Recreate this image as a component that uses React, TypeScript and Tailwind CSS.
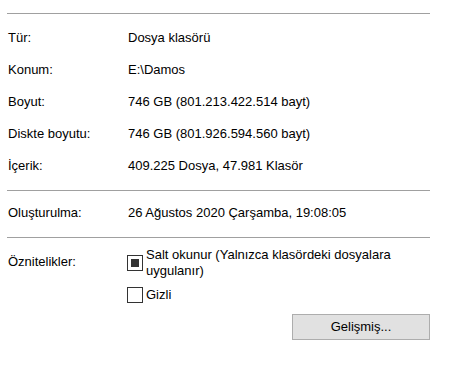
const rows = [
  { label: 'Tür:', value: 'Dosya klasörü' },
  { label: 'Konum:', value: 'E:\\Damos' },
  { label: 'Boyut:', value: '746 GB (801.213.422.514 bayt)' },
  { label: 'Diskte boyutu:', value: '746 GB (801.926.594.560 bayt)' },
  { label: 'İçerik:', value: '409.225 Dosya, 47.981 Klasör' },
]

function Checkbox({ checked }: { checked?: boolean }) {
  return (
    <span className="flex h-4 w-4 shrink-0 items-center justify-center border border-[#333] bg-white">
      {checked && <span className="h-2 w-2 bg-[#333]" />}
    </span>
  )
}

export default function App() {
  return (
    <div
      className="h-[376px] w-[464px] bg-white text-[13px] text-black"
      style={{ fontFamily: '"Liberation Sans", Arial, sans-serif' }}
    >
      <div className="ml-[7px] w-[423px] pt-[13px]">
        <div className="h-px bg-[#a0a0a0]" />

        {/* General info */}
        <div className="py-2">
          {rows.map(({ label, value }) => (
            <div key={label} className="flex h-8 items-center">
              <div className="w-[121px] pl-px">{label}</div>
              <div>{value}</div>
            </div>
          ))}
        </div>

        <div className="h-px bg-[#a0a0a0]" />

        <div className="pt-[6px] pb-2">
          <div className="flex h-8 items-center">
            <div className="w-[121px] pl-px">Oluşturulma:</div>
            <div>26 Ağustos 2020 Çarşamba, 19:08:05</div>
          </div>
        </div>

        <div className="h-px bg-[#a0a0a0]" />

        {/* Attributes */}
        <div className="flex">
          <div className="w-[120px] pl-px pt-4 leading-4">Öznitelikler:</div>
          <div className="flex flex-1 flex-col gap-2 pt-[9px]">
            <label className="flex items-start gap-[3px]">
              <span className="mt-2">
                <Checkbox checked />
              </span>
              <span className="leading-4">Salt okunur (Yalnızca klasördeki dosyalara uygulanır)</span>
            </label>
            <label className="flex items-center gap-[3px]">
              <Checkbox />
              <span className="leading-4">Gizli</span>
            </label>
          </div>
        </div>

        <div className="mt-[11px] flex justify-end">
          <button className="h-[26px] w-[138px] border border-[#adadad] bg-[#e1e1e1] text-[13px]">
            Gelişmiş...
          </button>
        </div>
      </div>
    </div>
  )
}
